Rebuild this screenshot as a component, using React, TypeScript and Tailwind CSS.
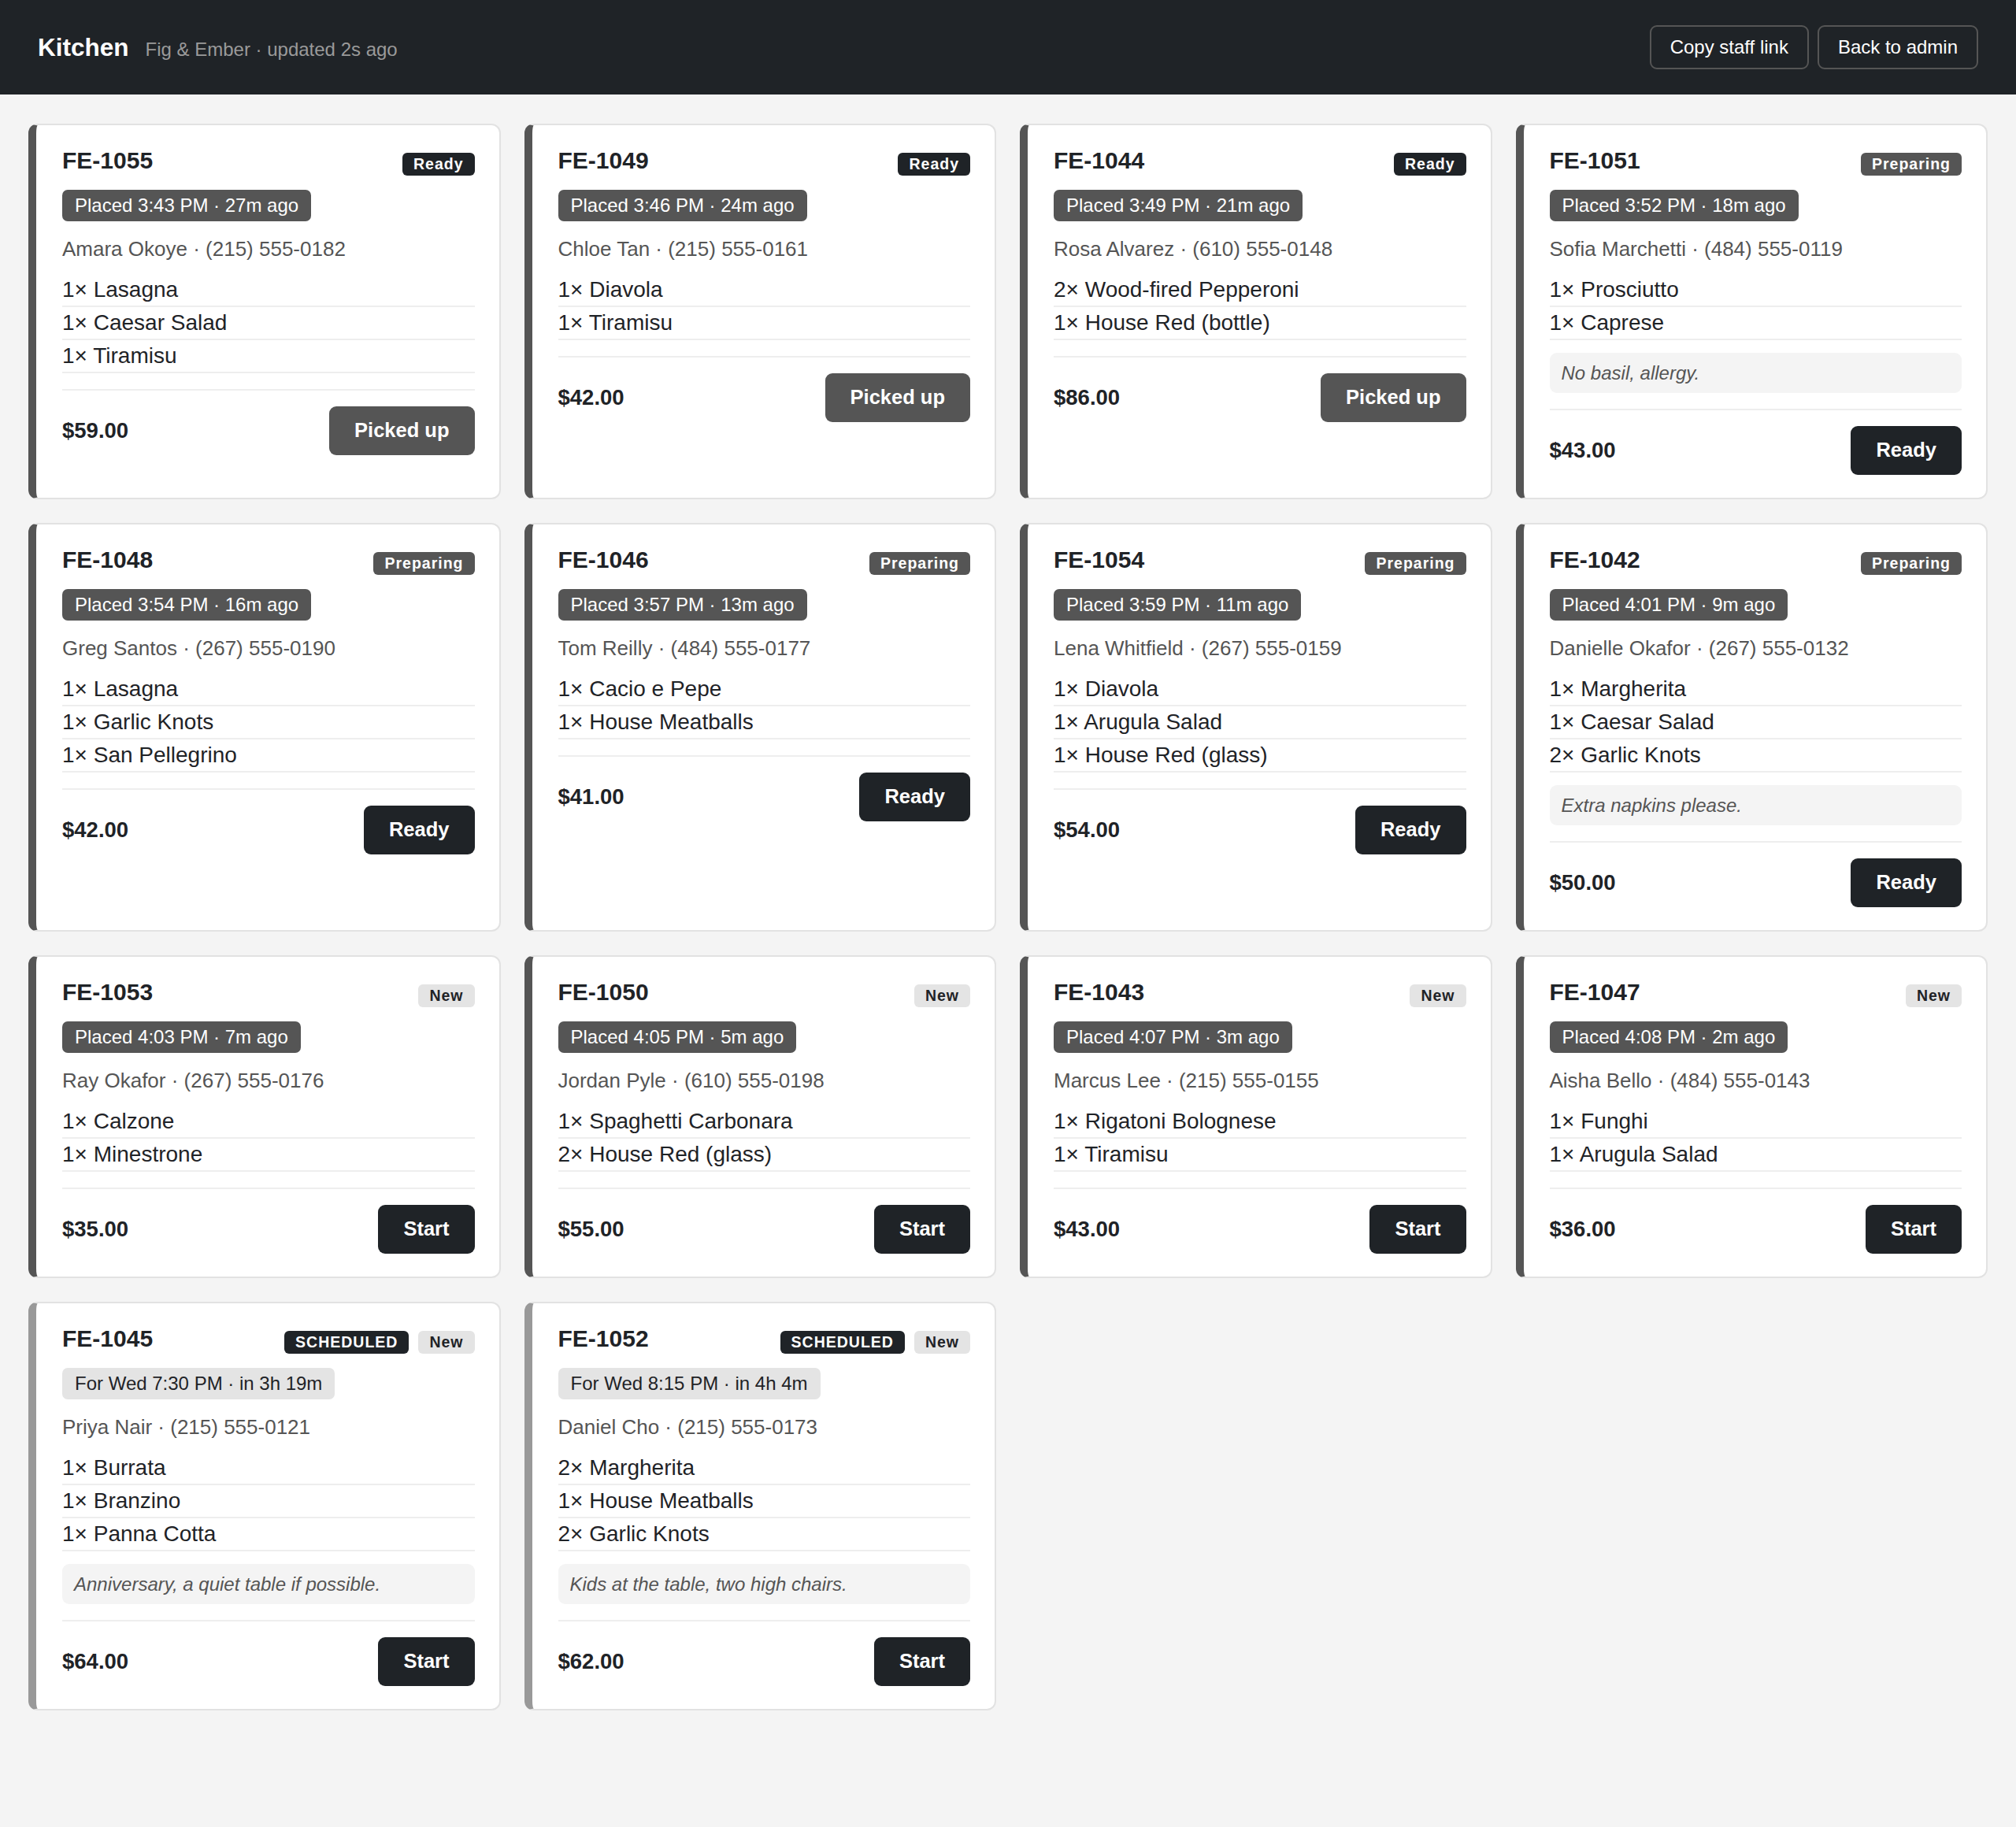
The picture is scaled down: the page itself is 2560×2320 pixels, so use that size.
import React from "react";

type Status = "Ready" | "Preparing" | "New";

interface Order {
  id: string;
  status: Status;
  scheduled?: boolean;
  time: string;
  customer: string;
  items: string[];
  note?: string;
  total: string;
}

const orders: Order[] = [
  { id: "FE-1055", status: "Ready", time: "Placed 3:43 PM · 27m ago", customer: "Amara Okoye · (215) 555-0182", items: ["1× Lasagna", "1× Caesar Salad", "1× Tiramisu"], total: "$59.00" },
  { id: "FE-1049", status: "Ready", time: "Placed 3:46 PM · 24m ago", customer: "Chloe Tan · (215) 555-0161", items: ["1× Diavola", "1× Tiramisu"], total: "$42.00" },
  { id: "FE-1044", status: "Ready", time: "Placed 3:49 PM · 21m ago", customer: "Rosa Alvarez · (610) 555-0148", items: ["2× Wood-fired Pepperoni", "1× House Red (bottle)"], total: "$86.00" },
  { id: "FE-1051", status: "Preparing", time: "Placed 3:52 PM · 18m ago", customer: "Sofia Marchetti · (484) 555-0119", items: ["1× Prosciutto", "1× Caprese"], note: "No basil, allergy.", total: "$43.00" },
  { id: "FE-1048", status: "Preparing", time: "Placed 3:54 PM · 16m ago", customer: "Greg Santos · (267) 555-0190", items: ["1× Lasagna", "1× Garlic Knots", "1× San Pellegrino"], total: "$42.00" },
  { id: "FE-1046", status: "Preparing", time: "Placed 3:57 PM · 13m ago", customer: "Tom Reilly · (484) 555-0177", items: ["1× Cacio e Pepe", "1× House Meatballs"], total: "$41.00" },
  { id: "FE-1054", status: "Preparing", time: "Placed 3:59 PM · 11m ago", customer: "Lena Whitfield · (267) 555-0159", items: ["1× Diavola", "1× Arugula Salad", "1× House Red (glass)"], total: "$54.00" },
  { id: "FE-1042", status: "Preparing", time: "Placed 4:01 PM · 9m ago", customer: "Danielle Okafor · (267) 555-0132", items: ["1× Margherita", "1× Caesar Salad", "2× Garlic Knots"], note: "Extra napkins please.", total: "$50.00" },
  { id: "FE-1053", status: "New", time: "Placed 4:03 PM · 7m ago", customer: "Ray Okafor · (267) 555-0176", items: ["1× Calzone", "1× Minestrone"], total: "$35.00" },
  { id: "FE-1050", status: "New", time: "Placed 4:05 PM · 5m ago", customer: "Jordan Pyle · (610) 555-0198", items: ["1× Spaghetti Carbonara", "2× House Red (glass)"], total: "$55.00" },
  { id: "FE-1043", status: "New", time: "Placed 4:07 PM · 3m ago", customer: "Marcus Lee · (215) 555-0155", items: ["1× Rigatoni Bolognese", "1× Tiramisu"], total: "$43.00" },
  { id: "FE-1047", status: "New", time: "Placed 4:08 PM · 2m ago", customer: "Aisha Bello · (484) 555-0143", items: ["1× Funghi", "1× Arugula Salad"], total: "$36.00" },
  { id: "FE-1045", status: "New", scheduled: true, time: "For Wed 7:30 PM · in 3h 19m", customer: "Priya Nair · (215) 555-0121", items: ["1× Burrata", "1× Branzino", "1× Panna Cotta"], note: "Anniversary, a quiet table if possible.", total: "$64.00" },
  { id: "FE-1052", status: "New", scheduled: true, time: "For Wed 8:15 PM · in 4h 4m", customer: "Daniel Cho · (215) 555-0173", items: ["2× Margherita", "1× House Meatballs", "2× Garlic Knots"], note: "Kids at the table, two high chairs.", total: "$62.00" },
];

const badgeBase =
  "inline-flex items-center h-[29px] px-[14px] rounded-[6px] text-[19.5px] font-bold tracking-[1px] leading-none";

function StatusBadge({ status }: { status: Status }) {
  if (status === "Ready") return <span className={`${badgeBase} bg-[#1f2327] text-white`}>Ready</span>;
  if (status === "Preparing") return <span className={`${badgeBase} bg-[#555555] text-white`}>Preparing</span>;
  return <span className={`${badgeBase} bg-[#e4e4e4] text-[#1f2327]`}>New</span>;
}

function ActionButton({ status }: { status: Status }) {
  const label = status === "Ready" ? "Picked up" : status === "Preparing" ? "Ready" : "Start";
  const bg = status === "Ready" ? "bg-[#555555]" : "bg-[#1f2327]";
  return (
    <button
      className={`${bg} text-white font-bold text-[25.5px] leading-none h-[62px] px-[32px] rounded-[9px] flex items-center`}
    >
      {label}
    </button>
  );
}

function OrderCard({ order }: { order: Order }) {
  const accent = order.scheduled ? "border-l-[#999999]" : "border-l-[#555555]";
  const pill = order.scheduled ? "bg-[#e4e4e4] text-[#1f2327]" : "bg-[#555555] text-white";
  return (
    <div
      className={`bg-white rounded-[12px] border-2 border-[#e2e2e2] border-l-[10px] ${accent} pl-[33px] pr-[31px] pt-[27px] pb-[29px] flex flex-col`}
    >
      {/* order number and status badges */}
      <div className="flex items-start justify-between">
        <div className="text-[30px] font-bold text-[#1f2327] leading-[35px]">{order.id}</div>
        <div className="mt-[8px] flex items-center gap-[12px]">
          {order.scheduled && (
            <span className={`${badgeBase} bg-[#1f2327] text-white`}>SCHEDULED</span>
          )}
          <StatusBadge status={order.status} />
        </div>
      </div>

      <div className="mt-[18px] flex">
        <span className={`${pill} h-[40px] flex items-center text-[24px] leading-none px-[16px] rounded-[7px]`}>
          {order.time}
        </span>
      </div>

      <div className="mt-[20px] text-[26px] leading-[30px] text-[#555555]">{order.customer}</div>

      {/* line items */}
      <div className="mt-[17px] flex flex-col">
        {order.items.map((it) => (
          <div key={it} className="text-[28px] leading-[40px] text-[#1f2327] border-b-2 border-[#eeeeee]">
            {it}
          </div>
        ))}
      </div>

      {order.note && (
        <div className="mt-[16px] bg-[#f4f4f4] rounded-[9px] px-[15px] py-[12px] text-[24px] leading-[27px] italic text-[#555555]">
          {order.note}
        </div>
      )}

      {/* total and next action */}
      <div className="mt-[20px] pt-[20px] border-t-2 border-[#eeeeee] flex items-center justify-between">
        <span className="text-[27.5px] font-bold text-[#1f2327] leading-none">{order.total}</span>
        <ActionButton status={order.status} />
      </div>
    </div>
  );
}

export default function App() {
  return (
    <div
      className="min-h-screen bg-[#f4f4f4]"
      style={{ fontFamily: '"Liberation Sans", Arial, Helvetica, sans-serif' }}
    >
      <header className="h-[120px] bg-[#1f2327] px-[48px] flex items-center justify-between">
        <div className="flex items-baseline gap-[21px]">
          <h1 className="text-[31.5px] font-bold text-white leading-[1.149]">Kitchen</h1>
          <span className="text-[24px] text-[#9a9a9a] leading-[1.149]">Fig &amp; Ember · updated 2s ago</span>
        </div>
        <div className="flex items-center gap-[11px]">
          <button className="border-2 border-[#555555] rounded-[9px] px-[24px] py-[12px] text-[24px] leading-[1.149] text-white">
            Copy staff link
          </button>
          <button className="border-2 border-[#555555] rounded-[9px] px-[24px] py-[12px] text-[24px] leading-[1.149] text-white">
            Back to admin
          </button>
        </div>
      </header>
      <main className="px-[36px] pt-[37px] pb-[36px] grid grid-cols-4 gap-[30px] items-stretch">
        {orders.map((o) => (
          <OrderCard key={o.id} order={o} />
        ))}
      </main>
    </div>
  );
}
